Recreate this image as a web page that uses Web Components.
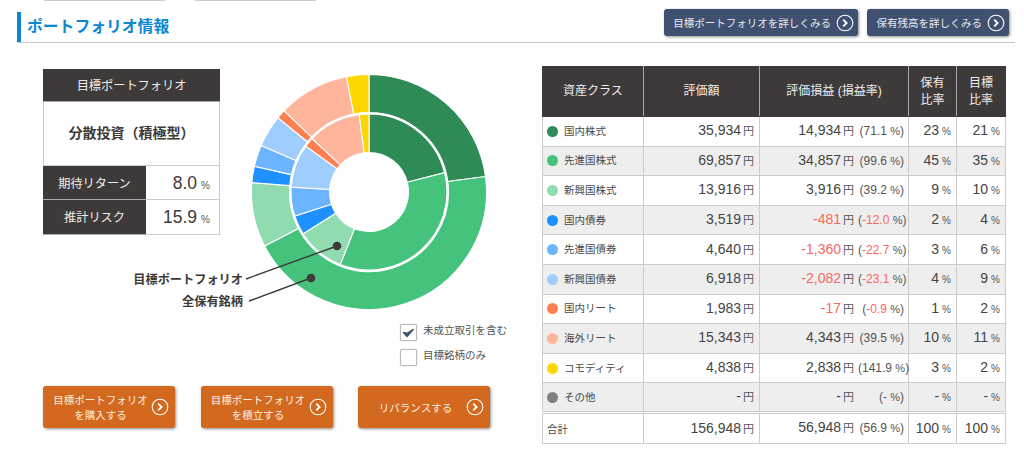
<!DOCTYPE html>
<html lang="ja">
<head>
<meta charset="utf-8">
<title>ポートフォリオ情報</title>
<style>
    html, body { margin: 0; background: #fff; }
    body { font-family: "Liberation Sans", "Noto Sans CJK JP", sans-serif; color: #3e3a39; }
</style>
</head>
<body>
<pf-page></pf-page>
<script>
const ARROW = `<svg width="18" height="18" viewBox="0 0 18 18" fill="none" stroke="#fff">
    <circle cx="9" cy="9" r="7.8" stroke-width="1.1"/>
    <path d="M7.2 5.6 10.6 9 7.2 12.4" stroke-width="1.9"/>
</svg>`;

class LinkButton extends HTMLElement {
    connectedCallback() {
        this.attachShadow({ mode: 'open' });
        this.shadowRoot.innerHTML = `
            <style>
                :host { display: flex; align-items: center; box-sizing: border-box; border-radius: 3px; color: #fff; font-size: 10.5px; box-shadow: 1px 1px 3px rgba(0,0,0,.45); }
                :host([tone="navy"]) { background: #3f5070; height: 27px; padding: 0 4px 0 9.5px; gap: 5px; color: #e8ebf0; }
                :host([tone="orange"]) { background: #d2691e; width: 132px; height: 42px; padding: 0 6px 0 10px; gap: 3px; line-height: 15px; text-align: center; color: #fdeee2; }
                :host([tone="orange"]) .label { padding-top: 2px; }
                .label { flex: 1; white-space: nowrap; }
                svg { flex: none; display: block; }
            </style>
            <span class="label"><slot></slot></span>${ARROW}`;
    }
}

class PfHeading extends HTMLElement {
    connectedCallback() {
        this.attachShadow({ mode: 'open' });
        this.shadowRoot.innerHTML = `
            <style>
                :host { display: flex; align-items: flex-end; justify-content: space-between; margin: 0 9px 0 17px; padding-top: 8px; height: 33px; border-bottom: 1px solid #c8c8c8; box-sizing: content-box; }
                h2 { margin: 0; align-self: flex-end; height: 30px; line-height: 29px; border-left: 4px solid #0a87cf; padding-left: 6px; font-size: 15.8px; font-weight: bold; color: #0a87cf; }
                .links { display: flex; gap: 9px; align-self: flex-start; margin-right: 6px; }
            </style>
            <h2><slot></slot></h2>
            <div class="links"><slot name="links"></slot></div>`;
    }
}

class PfSummary extends HTMLElement {
    connectedCallback() {
        this.attachShadow({ mode: 'open' });
        this.shadowRoot.innerHTML = `
            <style>
                :host { display: grid; grid-template-columns: 103px 74px; grid-template-rows: 33px 64px 34px 35px; width: 177px; height: 166px; align-self: flex-start; flex: none; box-sizing: border-box; }
                div { display: flex; align-items: center; justify-content: center; box-sizing: border-box; }
                .dark { background: #3e3a39; color: #eee; font-size: 12.2px; border-bottom: 1px solid #aaa; }
                .title { grid-column: 1 / 3; }
                .name { grid-column: 1 / 3; font-size: 14px; font-weight: bold; padding-bottom: 3px; border-bottom: 1px solid #ccc; border-right: 1px solid #ccc; border-left: 1px solid #ccc; }
                .val { justify-content: flex-end; align-items: baseline; padding: 7px 9px 0 0; font-size: 17.5px; color: #3e3a39; border-right: 1px solid #ccc; border-bottom: 1px solid #ccc; gap: 4px; }
                .val small { font-size: 10px; color: #555; }
            </style>
            <div class="dark title">目標ポートフォリオ</div>
            <div class="name">分散投資（積極型）</div>
            <div class="dark">期待リターン</div><div class="val">8.0<small>%</small></div>
            <div class="dark">推計リスク</div><div class="val">15.9<small>%</small></div>`;
    }
}

class PfDonut extends HTMLElement {
    sector(r0, r1, a0, a1, color) {
        const pt = (r, a) => {
            const t = a * 2 * Math.PI / 100;
            return (r * Math.sin(t)).toFixed(2) + ' ' + (-r * Math.cos(t)).toFixed(2);
        };
        const big = a1 - a0 > 50 ? 1 : 0;
        return `<path fill="${color}" d="M${pt(r0, a0)} L${pt(r1, a0)} A${r1} ${r1} 0 ${big} 1 ${pt(r1, a1)} L${pt(r0, a1)} A${r0} ${r0} 0 ${big} 0 ${pt(r0, a0)}Z"/>`;
    }

    ring(r0, r1, values) {
        let at = 0, out = '';
        values.forEach((v, i) => {
            out += this.sector(r0, r1, at, at + v, COLORS[i]);
            at += v;
        });
        return out;
    }

    connectedCallback() {
        const outer = [22.9, 44.5, 8.87, 2.24, 2.96, 4.41, 1.26, 9.78, 3.08];
        const inner = [21, 35, 10, 4, 6, 9, 2, 11, 2];
        this.attachShadow({ mode: 'open' });
        this.shadowRoot.innerHTML = `
            <style>
                :host { display: block; position: relative; flex: none; width: 234px; height: 234px; margin-top: 6px; }
                svg { display: block; overflow: visible; }
                .tag { position: absolute; right: calc(100% + 9px); font-size: 12.2px; font-weight: bold; white-space: nowrap; color: #3e3a39; }
            </style>
            <svg width="234" height="234" viewBox="-117 -117 234 234">
                <g stroke="#fff" stroke-width="1.1">${this.ring(79.5, 117.5, outer)}</g>
                <g stroke="#fff" stroke-width="1.1">${this.ring(39.5, 78, inner)}</g>
                <g stroke="#3e3a39" fill="#3e3a39">
                    <line x1="-123" y1="87" x2="-32" y2="54" stroke-width="1.4"/>
                    <circle cx="-32" cy="54" r="4.3" stroke="none"/>
                    <line x1="-120" y1="109" x2="-58" y2="86" stroke-width="1.4"/>
                    <circle cx="-58" cy="86" r="4.3" stroke="none"/>
                </g>
            </svg>
            <span class="tag" style="top:195px">目標ポートフォリオ</span>
            <span class="tag" style="top:217px">全保有銘柄</span>`;
    }
}

class PfCheck extends HTMLElement {
    connectedCallback() {
        const mark = this.hasAttribute('checked')
            ? '<svg width="17" height="17" viewBox="0 0 17 17"><path d="M3.4 8.4 7 12.6 13.4 5.4 7.2 9.4Z" fill="#3f5070" stroke="#3f5070" stroke-width="1.4" stroke-linejoin="round"/></svg>'
            : '';
        this.attachShadow({ mode: 'open' });
        this.shadowRoot.innerHTML = `
            <style>
                :host { display: flex; align-items: flex-start; gap: 6px; font-size: 10.5px; line-height: 13px; color: #555; white-space: nowrap; }
                .box { flex: none; width: 17px; height: 17px; box-sizing: border-box; border: 1px solid #bbb; border-radius: 2px; box-shadow: 0 0 1px #999; background: #fff; position: relative; }
                svg { position: absolute; left: -1px; top: -1px; }
            </style>
            <span class="box">${mark}</span><span><slot></slot></span>`;
    }
}

const COLORS = ['#2e8b57', '#45c27c', '#90dcb0', '#1e90ff', '#6cb4ff', '#9fcdff', '#ff7f50', '#ffb49c', '#ffd700', '#808080'];

class AssetTable extends HTMLElement {
    amount(text) {
        return text.startsWith('-') && text.length > 1 ? `<b class="neg">${text}</b>` : `<b>${text}</b>`;
    }

    rate(text) {
        return text.startsWith('-') && text.length > 1 ? `(<span class="neg">${text}</span> <i class="rp">%</i>)` : `(${text} <i class="rp">%</i>)`;
    }

    cells(v) {
        return `
            <td class="num"><b>${v[0]}</b><i class="yen">円</i></td>
            <td class="pl"><span class="pl-in"><span class="amt">${this.amount(v[1])}<i class="yen">円</i></span><span class="rate">${this.rate(v[2])}</span></span></td>
            <td class="num"><b>${v[3]}</b><i class="pct">%</i></td>
            <td class="num"><b>${v[4]}</b><i class="pct">%</i></td>`;
    }

    connectedCallback() {
        const rows = [
            ['国内株式', '35,934', '14,934', '71.1', '23', '21'],
            ['先進国株式', '69,857', '34,857', '99.6', '45', '35'],
            ['新興国株式', '13,916', '3,916', '39.2', '9', '10'],
            ['国内債券', '3,519', '-481', '-12.0', '2', '4'],
            ['先進国債券', '4,640', '-1,360', '-22.7', '3', '6'],
            ['新興国債券', '6,918', '-2,082', '-23.1', '4', '9'],
            ['国内リート', '1,983', '-17', '-0.9', '1', '2'],
            ['海外リート', '15,343', '4,343', '39.5', '10', '11'],
            ['コモディティ', '4,838', '2,838', '141.9', '3', '2'],
            ['その他', '-', '-', '-', '-', '-']
        ];
        const body = rows.map((r, i) => `
            <tr>
                <td class="name"><span class="dot" style="background:${COLORS[i]}"></span>${r[0]}</td>
                ${this.cells(r.slice(1))}
            </tr>`).join('');

        this.attachShadow({ mode: 'open' });
        this.shadowRoot.innerHTML = `
            <style>
                :host { display: block; flex: none; width: 463px; margin-top: 23px; }
                table { width: 463px; table-layout: fixed; border-collapse: collapse; color: #3e3a39; }
                th { background: #3e3a39; color: #eee; font-size: 12px; font-weight: normal; line-height: 17px; height: 50px; box-sizing: border-box; padding: 0; border: 1px solid #aaa; border-top-color: #3e3a39; border-bottom-color: #3e3a39; }
                th:first-child { border-left-color: #3e3a39; }
                th:last-child { border-right-color: #3e3a39; }
                td { height: 29.6px; padding: 0 5px 2px 0; border: 1px solid #ccc; box-sizing: border-box; white-space: nowrap; }
                tbody tr:nth-child(even) td { background: #eee; }
                tfoot td { border-top: 3px double #ccc; height: 31px; padding-bottom: 0; }
                .name { font-size: 10.5px; padding-left: 4px; color: #4a4a4a; }
                .dot { display: inline-block; width: 11px; height: 11px; border-radius: 50%; margin-right: 6px; vertical-align: -2px; }
                .num { text-align: right; }
                b { font-weight: normal; font-size: 14px; color: #444; }
                i { font-style: normal; color: #555; margin-left: 3px; }
                .yen { font-size: 11px; margin-left: 2px; }
                .pct { font-size: 10px; }
                .pl { padding: 0 0 2px; }
                .pl-in { display: flex; justify-content: flex-end; align-items: baseline; padding-right: 4px; gap: 4px; }
                .amt { text-align: right; }
                .rate { width: 46px; flex: none; text-align: right; font-size: 12px; color: #555; white-space: nowrap; }
                .rate .rp { font-size: 11px; margin-left: 0; }
                .neg { color: #f8695f; }
                .rate .neg { font-size: 12px; }
            </style>
            <table>
                <colgroup><col style="width:101px"><col style="width:116px"><col style="width:149px"><col style="width:48px"><col style="width:49px"></colgroup>
                <thead><tr><th>資産クラス</th><th>評価額</th><th>評価損益 (損益率)</th><th>保有<br>比率</th><th>目標<br>比率</th></tr></thead>
                <tbody>${body}</tbody>
                <tfoot><tr><td class="name">合計</td>${this.cells(['156,948', '56,948', '56.9', '100', '100'])}</tr></tfoot>
            </table>`;
    }
}

class PfPage extends HTMLElement {
    connectedCallback() {
        this.attachShadow({ mode: 'open' });
        this.shadowRoot.innerHTML = `
            <style>
                :host { display: block; width: 1024px; height: 458px; overflow: hidden; position: relative; }
                .tabs { display: flex; gap: 30px; padding-left: 44px; height: 1px; }
                .tabs span { width: 121px; background: #ccc; }
                .main { display: flex; gap: 52px; padding-left: 43px; }
                .left { width: 447px; flex: none; margin-top: 26px; }
                .top { display: flex; gap: 32px; }
                .opts { display: flex; flex-direction: column; gap: 8px; margin: 15px 0 0 357px; }
                .btns { display: flex; justify-content: space-between; margin-top: 20px; }
            </style>
            <div class="tabs"><span></span><span></span></div>
            <pf-heading>ポートフォリオ情報
                <link-button slot="links" tone="navy">目標ポートフォリオを詳しくみる</link-button>
                <link-button slot="links" tone="navy">保有残高を詳しくみる</link-button>
            </pf-heading>
            <div class="main">
                <div class="left">
                    <div class="top"><pf-summary></pf-summary><pf-donut></pf-donut></div>
                    <div class="opts">
                        <pf-check checked>未成立取引を含む</pf-check>
                        <pf-check>目標銘柄のみ</pf-check>
                    </div>
                    <div class="btns">
                        <link-button tone="orange">目標ポートフォリオ<br>を購入する</link-button>
                        <link-button tone="orange">目標ポートフォリオ<br>を積立する</link-button>
                        <link-button tone="orange">リバランスする</link-button>
                    </div>
                </div>
                <asset-table></asset-table>
            </div>`;
    }
}

customElements.define('link-button', LinkButton);
customElements.define('pf-heading', PfHeading);
customElements.define('pf-summary', PfSummary);
customElements.define('pf-donut', PfDonut);
customElements.define('pf-check', PfCheck);
customElements.define('asset-table', AssetTable);
customElements.define('pf-page', PfPage);
</script>
</body>
</html>
